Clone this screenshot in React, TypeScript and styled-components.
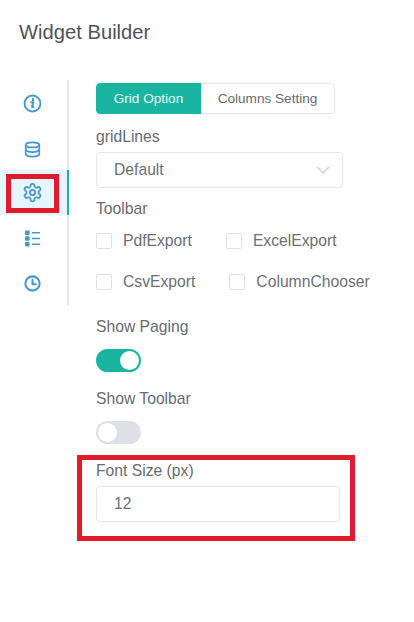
import React from "react";
import styled, { createGlobalStyle } from "styled-components";

const Global = createGlobalStyle`
  html, body { margin: 0; padding: 0; background: #fff; }
  body { font-family: "Liberation Sans", Arial, sans-serif; color: #686b6f; }
  * { box-sizing: border-box; }
`;
const Page = styled.div`
  width: 414px;
  height: 622px;
  overflow: hidden;
  padding: 21px 0 0 0;
`;
const Title = styled.h1`
  margin: 0 0 0 19px;
  font-size: 20.2px;
  line-height: 22px;
  font-weight: 400;
  color: #505356;
`;
const Body = styled.div`
  display: flex;
  margin-top: 37px;
`;
const Side = styled.nav`
  width: 69px;
  height: 225px;
  border-right: 2px solid #e4e6ea;
  display: flex;
  flex-direction: column;
  flex-shrink: 0;
`;
const SideItem = styled.div<{ $active?: boolean; $shift: number }>`
  position: relative;
  height: 45px;
  margin-right: -2px;
  display: flex;
  align-items: center;
  justify-content: center;
  padding: ${(p) => p.$shift}px 3px 0 0;
  background: ${(p) => (p.$active ? "#e6f4fc" : "transparent")};
  border-right: 2px solid ${(p) => (p.$active ? "#1ab5a1" : "transparent")};
  color: #4599cf;
`;
const Mark = styled.span`
  position: absolute;
  left: 6px;
  top: 4px;
  width: 53px;
  height: 39px;
  border: 5px solid #e01c2c;
`;
const Main = styled.main`
  margin-left: 27px;
  width: 300px;
  padding-top: 3px;
`;
const Tabs = styled.div`
  display: flex;
  width: 239px;
  height: 31px;
  border-radius: 4px;
  overflow: hidden;
`;
const Tab = styled.div<{ $on?: boolean; $w: number }>`
  width: ${(p) => p.$w}px;
  display: flex;
  align-items: center;
  justify-content: center;
  font-size: 13.6px;
  background: ${(p) => (p.$on ? "#1ab5a1" : "#fff")};
  color: ${(p) => (p.$on ? "#e6f8f5" : "#686b6f")};
  border: ${(p) => (p.$on ? "none" : "1px solid #e4e6ea")};
  border-left: none;
  border-radius: ${(p) => (p.$on ? "4px 0 0 4px" : "0 4px 4px 0")};
`;
const Label = styled.div<{ $top: number }>`
  font-size: 15.7px;
  line-height: 18px;
  padding-top: 1px;
  margin-bottom: -1px;
  margin-top: ${(p) => p.$top}px;
  color: #686b6f;
`;
const Select = styled.div`
  margin-top: 7px;
  width: 247px;
  height: 36px;
  border: 1px solid #e4e6ea;
  border-radius: 4px;
  padding: 0 12px 0 17px;
  display: flex;
  align-items: center;
  justify-content: space-between;
  font-size: 15.7px;
  color: #6c6f73;
`;
const CheckRow = styled.div<{ $gap: number; $top: number }>`
  display: flex;
  gap: ${(p) => p.$gap}px;
  margin-top: ${(p) => p.$top}px;
`;
const Check = styled.label`
  display: flex;
  align-items: center;
  gap: 11px;
  font-size: 15.7px;
  line-height: 18px;
  color: #6c6f73;
`;
const Box = styled.span`
  width: 16px;
  height: 16px;
  border: 1px solid #e0e2e6;
  border-radius: 2px;
  background: #fff;
`;
const Toggle = styled.div<{ $on?: boolean; $top: number }>`
  width: 45px;
  height: 23px;
  border-radius: 12px;
  margin-top: ${(p) => p.$top}px;
  padding: 2px;
  display: flex;
  justify-content: ${(p) => (p.$on ? "flex-end" : "flex-start")};
  background: ${(p) => (p.$on ? "#1ab5a1" : "#dde0e7")};
`;
const Knob = styled.span`
  width: 19px;
  height: 19px;
  border-radius: 50%;
  background: #fff;
`;
const Annotated = styled.section`
  margin: 11px 0 0 -19px;
  width: 278px;
  height: 86px;
  border: 5px solid #e01c2c;
  padding: 1px 0 0 14px;
`;
const Input = styled.div`
  margin-top: 7px;
  width: 244px;
  height: 36px;
  border: 1px solid #e4e6ea;
  border-radius: 4px;
  padding-left: 17px;
  display: flex;
  align-items: center;
  font-size: 15.7px;
  color: #6c6f73;
`;

const Ic = styled.svg<{ $s: number }>`
  width: ${(p) => p.$s}px;
  height: ${(p) => p.$s}px;
  fill: none;
  stroke: currentColor;
  stroke-width: 2;
  stroke-linecap: round;
  stroke-linejoin: round;
`;

export default function App() {
  return (
    <Page>
      <Global />
      <Title>Widget Builder</Title>
      <Body>
        <Side>
          <SideItem $shift={1}>
            <Ic $s={19} viewBox="0 0 20 20">
              <circle cx="10" cy="10" r="8.4" />
              <path d="M8.8 8.6h2l-1.2 5h1.4" strokeWidth="2.2" />
              <path d="M10.6 5.6v.6" strokeWidth="2.6" />
            </Ic>
          </SideItem>
          <SideItem $shift={3}>
            <Ic $s={17} viewBox="0 0 20 20">
              <ellipse cx="10" cy="4.6" rx="8" ry="3" />
              <path d="M2 4.6v10.8c0 1.6 3.6 3 8 3s8-1.4 8-3V4.6" />
              <path d="M2 10c0 1.6 3.6 3 8 3s8-1.4 8-3" />
            </Ic>
          </SideItem>
          <SideItem $shift={0} $active>
            <Ic $s={21} viewBox="0 0 24 24" strokeWidth="2.5">
              <circle cx="12" cy="12" r="3" />
              <path d="M12.22 2h-.44a2 2 0 0 0-2 2v.18a2 2 0 0 1-1 1.73l-.43.25a2 2 0 0 1-2 0l-.15-.08a2 2 0 0 0-2.73.73l-.22.38a2 2 0 0 0 .73 2.73l.15.1a2 2 0 0 1 1 1.72v.51a2 2 0 0 1-1 1.74l-.15.09a2 2 0 0 0-.73 2.73l.22.38a2 2 0 0 0 2.73.73l.15-.08a2 2 0 0 1 2 0l.43.25a2 2 0 0 1 1 1.73V20a2 2 0 0 0 2 2h.44a2 2 0 0 0 2-2v-.18a2 2 0 0 1 1-1.73l.43-.25a2 2 0 0 1 2 0l.15.08a2 2 0 0 0 2.73-.73l.22-.39a2 2 0 0 0-.73-2.73l-.15-.08a2 2 0 0 1-1-1.74v-.5a2 2 0 0 1 1-1.74l.15-.09a2 2 0 0 0 .73-2.73l-.22-.38a2 2 0 0 0-2.73-.73l-.15.08a2 2 0 0 1-2 0l-.43-.25a2 2 0 0 1-1-1.73V4a2 2 0 0 0-2-2z" />
            </Ic>
            <Mark />
          </SideItem>
          <SideItem $shift={1}>
            <Ic $s={17} viewBox="0 0 17 17">
              <rect x="1" y="0.5" width="4.6" height="4.6" rx="1" fill="currentColor" stroke="none" />
              <rect x="1" y="6.2" width="4.6" height="4.6" rx="1" fill="currentColor" stroke="none" />
              <rect x="1" y="11.9" width="4.6" height="4.6" rx="1" fill="currentColor" stroke="none" />
              <path d="M8 2.8h8M8 8.5h8M8 14.2h8" strokeWidth="1.6" strokeLinecap="butt" />
            </Ic>
          </SideItem>
          <SideItem $shift={1}>
            <Ic $s={17} viewBox="0 0 20 20">
              <circle cx="10" cy="10" r="8.4" strokeWidth="2.4" />
              <path d="M10 5.6V10.8h3.8" strokeWidth="2.4" />
            </Ic>
          </SideItem>
        </Side>
        <Main>
          <Tabs>
            <Tab $on $w={105}>Grid Option</Tab>
            <Tab $w={134}>Columns Setting</Tab>
          </Tabs>
          <Label $top={13}>gridLines</Label>
          <Select>
            Default
            <svg width="14" height="8" viewBox="0 0 14 8" fill="none" stroke="#c6c9ce" strokeWidth="1.2">
              <path d="M1 1l6 6 6-6" />
            </svg>
          </Select>
          <Label $top={11}>Toolbar</Label>
          <CheckRow $gap={34} $top={15}>
            <Check><Box />PdfExport</Check>
            <Check><Box />ExcelExport</Check>
          </CheckRow>
          <CheckRow $gap={34} $top={23}>
            <Check><Box />CsvExport</Check>
            <Check><Box />ColumnChooser</Check>
          </CheckRow>
          <Label $top={26}>Show Paging</Label>
          <Toggle $on $top={14}><Knob /></Toggle>
          <Label $top={17}>Show Toolbar</Label>
          <Toggle $top={14}><Knob /></Toggle>
          <Annotated>
            <Label $top={0}>Font Size (px)</Label>
            <Input>12</Input>
          </Annotated>
        </Main>
      </Body>
    </Page>
  );
}
